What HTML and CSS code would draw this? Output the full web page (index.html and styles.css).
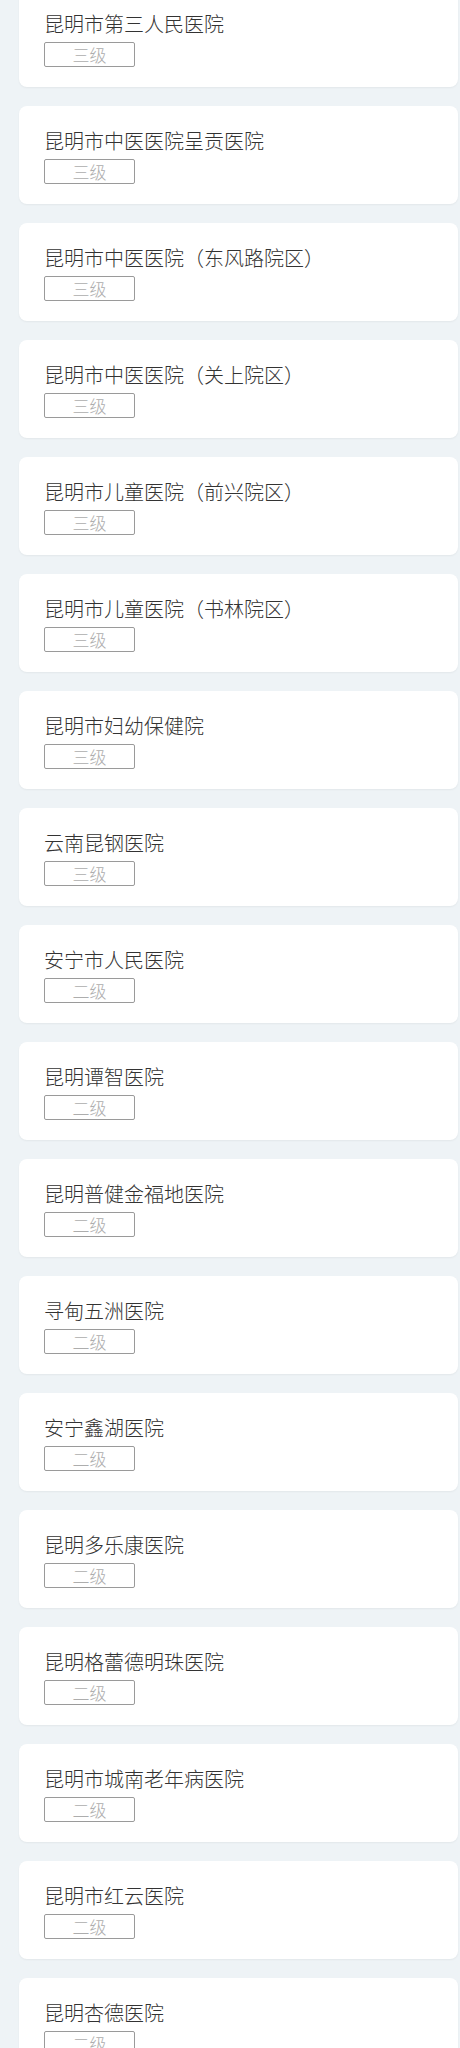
FILE: index.html
```html
<!DOCTYPE html>
<html lang="zh">
<head>
<meta charset="utf-8">
<link rel="stylesheet" href="styles.css">
</head>
<body>
<div class="list">
  <div class="card"><div class="name">昆明市第三人民医院</div><span class="level">三级</span></div>
  <div class="card"><div class="name">昆明市中医医院呈贡医院</div><span class="level">三级</span></div>
  <div class="card"><div class="name">昆明市中医医院（东风路院区）</div><span class="level">三级</span></div>
  <div class="card"><div class="name">昆明市中医医院（关上院区）</div><span class="level">三级</span></div>
  <div class="card"><div class="name">昆明市儿童医院（前兴院区）</div><span class="level">三级</span></div>
  <div class="card"><div class="name">昆明市儿童医院（书林院区）</div><span class="level">三级</span></div>
  <div class="card"><div class="name">昆明市妇幼保健院</div><span class="level">三级</span></div>
  <div class="card"><div class="name">云南昆钢医院</div><span class="level">三级</span></div>
  <div class="card"><div class="name">安宁市人民医院</div><span class="level">二级</span></div>
  <div class="card"><div class="name">昆明谭智医院</div><span class="level">二级</span></div>
  <div class="card"><div class="name">昆明普健金福地医院</div><span class="level">二级</span></div>
  <div class="card"><div class="name">寻甸五洲医院</div><span class="level">二级</span></div>
  <div class="card"><div class="name">安宁鑫湖医院</div><span class="level">二级</span></div>
  <div class="card"><div class="name">昆明多乐康医院</div><span class="level">二级</span></div>
  <div class="card"><div class="name">昆明格蕾德明珠医院</div><span class="level">二级</span></div>
  <div class="card"><div class="name">昆明市城南老年病医院</div><span class="level">二级</span></div>
  <div class="card"><div class="name">昆明市红云医院</div><span class="level">二级</span></div>
  <div class="card"><div class="name">昆明杏德医院</div><span class="level">二级</span></div>
</div>
</body>
</html>
```
FILE: styles.css
```css
html, body {
  margin: 0;
  padding: 0;
  background: #eef3f6;
}
body {
  font-family: "Noto Sans CJK SC", "Noto Sans", sans-serif;
  overflow: hidden;
}
.list {
  display: flex;
  flex-direction: column;
  gap: 19px;
  margin-top: -11px;
  padding-left: 19px;
  padding-right: 2px;
}
.card {
  background: #ffffff;
  border-radius: 8px;
  box-shadow: 0 1px 2px rgba(0, 0, 0, 0.05);
  padding: 20px 25px 20px 25px;
  height: 58px;
  display: flex;
  flex-direction: column;
  align-items: flex-start;
}
.name {
  font-size: 20px;
  font-weight: 300;
  line-height: 30px;
  color: #333333;
  white-space: nowrap;
}
.level {
  margin-top: 3px;
  box-sizing: border-box;
  width: 91px;
  height: 25px;
  border: 1px solid #9a9a9a;
  border-radius: 2px;
  font-size: 17px;
  font-weight: 300;
  line-height: 23px;
  color: #adadad;
  text-align: center;
}
```
